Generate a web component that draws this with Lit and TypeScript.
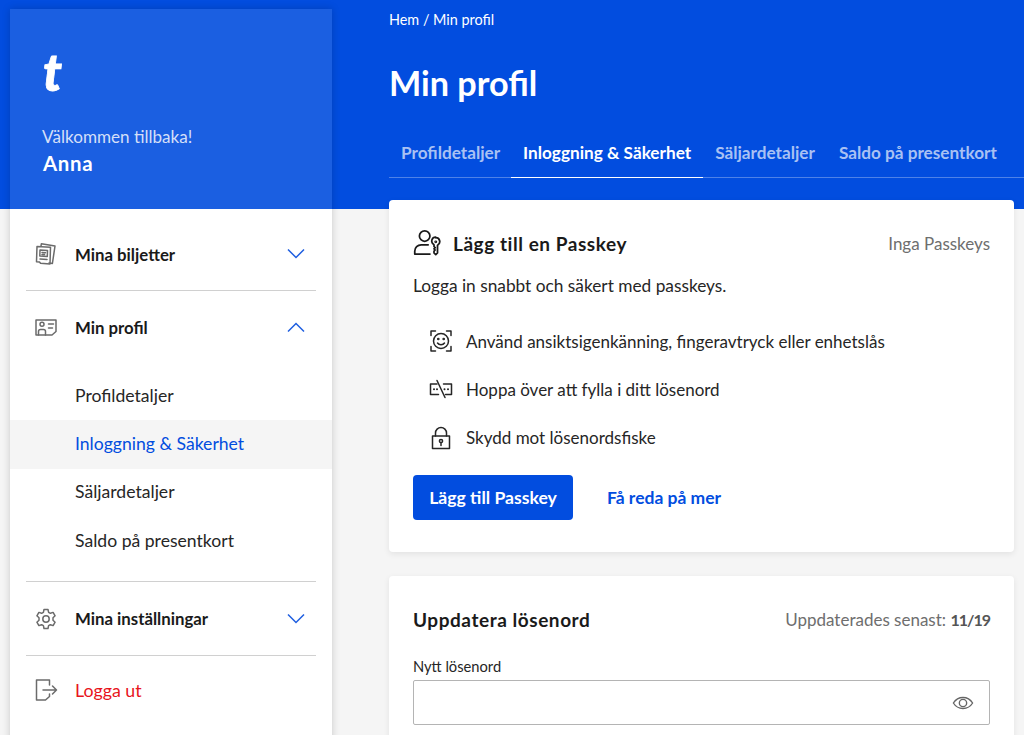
import { LitElement, html, css, svg } from 'lit'
import { customElement } from 'lit/decorators.js'

// Stroke icons, all drawn on a 24 box
const icon = (body: unknown, size = 24) => html`<svg
  width=${size}
  height=${size}
  viewBox="0 0 24 24"
  fill="none"
  stroke="currentColor"
  stroke-width="1.5"
  stroke-linecap="round"
  stroke-linejoin="round"
>
  ${body}
</svg>`

const icons = {
  tickets: svg`<path d="M7 4l.4-2.300 13.600 2.300-2.600 17.500-3.400-.5"/><path d="M3 4.500l13.500.8-.5 16.700-9.500-.8-1-1.200-3-.3z"/><path d="M6 8l7.500.4-.2 6-7.500-.4zM8 10.500l3.500.2M8 12.500l2.500.1M6 17l7 .4"/>`,
  profile: svg`<path d="M2 5h20v11.500l-4 3.500h-16z"/><circle cx="8" cy="9.300" r="2"/><path d="M4.500 20v-3.500a2 2 0 0 1 2-2h3a2 2 0 0 1 2 2v3.500M14.500 9h5M14.500 13h4"/>`,
  gear: svg`<circle cx="12" cy="12" r="3.200"/><path d="M10 2.500h4l.6 2.800 1.800 1 2.700-.9 2 3.400-2.100 1.900v2.600l2.100 1.900-2 3.400-2.700-.9-1.800 1-.6 2.800h-4l-.6-2.800-1.800-1-2.700.9-2-3.400 2.100-1.900v-2.600l-2.100-1.900 2-3.400 2.700.9 1.800-1z"/>`,
  logout: svg`<path d="M15.500 7v-5h-13v20h9l4-3.500v-2.500"/><path d="M9 12h13.500M18.500 8l4 4-4 4"/>`,
  personKey: svg`<circle cx="10" cy="6" r="4.500"/><path d="M1.500 21.500v-2.500a5.500 5.500 0 0 1 5.500-5.500h6M1.500 21.500h13"/><path d="M19.500 7.500a3.300 3.300 0 0 1 2 6l-.5.500v6.500l-1.500 1.500-1.500-1.500v-1.500l1-1-1-1 1-1-1-1v-1.500l-.5-.5a3.300 3.300 0 0 1 2-6z"/><circle cx="19.500" cy="11" r=".5"/>`,
  face: svg`<path d="M2 6.500v-4.500h4.500M17.500 2h4.500v4.500M22 17.500v4.500h-4.500M6.500 22h-4.500v-4.500"/><circle cx="12" cy="12" r="7.500"/><circle cx="9.300" cy="10" r=".6"/><circle cx="14.700" cy="10" r=".6"/><path d="M8.500 14c1.500 2.200 5.500 2.200 7 0"/>`,
  noPassword: svg`<path d="M8 7h-6.500v10.500h8M14.500 7h8v10.500h-6"/><path d="M8 3.500l8 17"/><path d="M5 12.300h.01M8 12.300h.01M15.500 12.300h.01M19 12.300h.01" stroke-width="2"/>`,
  lock: svg`<rect x="3.500" y="10" width="17" height="12.500"/><path d="M6.500 10v-3a5.500 5.500 0 0 1 11 0v3"/><circle cx="12" cy="15" r="1.600"/><path d="M12 16.600v3"/>`,
  eye: svg`<path d="M1.500 12c5-8 16-8 21 0-5 8-16 8-21 0z"/><circle cx="12" cy="12" r="4"/>`,
}

const chevron = (up: boolean) => html`<svg class="chevron" width="18" height="10" viewBox="0 0 18 10" fill="none" stroke="currentColor" stroke-width="1.5">
  <path d=${up ? 'M1 9.500l8-8 8 8' : 'M1 .5l8 8 8-8'} />
</svg>`

@customElement('side-nav')
export class SideNav extends LitElement {
  static styles = css`
    :host {
      display: block;
      background: #fff;
      box-shadow: 0 0 8px rgba(0, 0, 0, 0.18);
    }
    .welcome {
      height: 200px;
      box-sizing: border-box;
      padding: 33px 32px 0;
      background: #1b5fe1;
      color: #fff;
    }
    .logo {
      font: italic 900 51px/60px 'Lato', sans-serif;
      -webkit-text-stroke: 0.8px #fff;
      height: 60px;
      padding-left: 1px;
    }
    .hello {
      margin-top: 24px;
      font-size: 17.100px;
      line-height: 22px;
      color: #d4dff8;
    }
    .name {
      margin-top: 2px;
      padding-left: 1px;
      font-size: 20.400px;
      line-height: 26px;
      font-weight: 700;
      letter-spacing: 0.7px;
    }
    nav {
      padding-top: 9px;
      height: 518px;
    }
    .row {
      display: flex;
      align-items: center;
      height: 72px;
      margin: 0 16px;
      border-bottom: 1px solid #d0d0d0;
      color: #1a1a1a;
      font-size: 16.800px;
      font-weight: 700;
    }
    .row.open {
      border-bottom: 0;
    }
    .row.tall {
      height: 73px;
    }
    .row.last {
      height: 68px;
      border-bottom: 0;
      color: #e8141c;
      font-size: 17.800px;
      font-weight: 400;
    }
    .row svg {
      color: #6b6b6b;
      margin-left: 8px;
      flex: none;
    }
    .row .label {
      flex: 1;
      margin-left: 17px;
    }
    .row svg.chevron {
      color: #1f5fe0;
      margin: 0 11px 0 0;
    }
    .subitems {
      padding: 9px 0 16px;
    }
    .divider {
      height: 1px;
      margin: 0 16px;
      background: #d0d0d0;
    }
    .subitem {
      height: 48.330px;
      box-sizing: border-box;
      display: flex;
      align-items: center;
      padding: 0 0 2px 65px;
      font-size: 17.600px;
      color: #262626;
    }
    .subitem.active {
      background: #f5f5f5;
      color: #024ddf;
    }
  `

  render() {
    return html`
      <div class="welcome">
        <div class="logo">t</div>
        <div class="hello">Välkommen tillbaka!</div>
        <div class="name">Anna</div>
      </div>
      <nav>
        <div class="row">
          ${icon(icons.tickets)}<span class="label">Mina biljetter</span>${chevron(false)}
        </div>
        <div class="row open">
          ${icon(icons.profile)}<span class="label">Min profil</span>${chevron(true)}
        </div>
        <div class="subitems">
          <div class="subitem">Profildetaljer</div>
          <div class="subitem active">Inloggning &amp; Säkerhet</div>
          <div class="subitem">Säljardetaljer</div>
          <div class="subitem">Saldo på presentkort</div>
        </div>
        <div class="divider"></div>
        <div class="row tall">
          ${icon(icons.gear)}<span class="label">Mina inställningar</span>${chevron(false)}
        </div>
        <div class="row last">
          ${icon(icons.logout)}<span class="label">Logga ut</span>
        </div>
      </nav>
    `
  }
}

@customElement('app-root')
export class AppRoot extends LitElement {
  static styles = css`
    :host {
      display: block;
      height: 735px;
      overflow: hidden;
      font-family: 'Lato', 'Liberation Sans', sans-serif;
      background: linear-gradient(#024ddf 209px, #f5f5f5 209px);
    }
    .page {
      display: grid;
      grid-template-columns: 322px 1fr;
      column-gap: 57px;
      padding: 9px 10px 0;
    }
    .crumbs {
      margin-top: 2px;
      font-size: 14.400px;
      line-height: 18px;
      color: #fff;
    }
    h1 {
      margin: 32px 0 0;
      font-size: 34.200px;
      line-height: 44px;
      font-weight: 700;
      color: #fff;
    }
    .tabs {
      display: flex;
      margin-top: 23px;
      margin-right: -10px;
      height: 50px;
      box-sizing: border-box;
      border-bottom: 1px solid rgba(255, 255, 255, 0.3);
    }
    .tab {
      padding: 0 12px;
      height: 50px;
      box-sizing: border-box;
      line-height: 50px;
      font-size: 17.200px;
      font-weight: 700;
      color: #a9c1f3;
    }
    .tab:first-child {
      padding-right: 11px;
    }
    .tab.active {
      color: #fff;
      border-bottom: 1px solid #fff;
    }
    .card {
      background: #fff;
      border-radius: 4px;
      box-shadow: 0 2px 6px rgba(0, 0, 0, 0.08);
      padding: 0 24px;
    }
    .passkey {
      margin-top: 22px;
      height: 352px;
      box-sizing: border-box;
      padding-top: 29px;
    }
    .head {
      display: flex;
      align-items: center;
      justify-content: space-between;
      color: #1a1a1a;
    }
    .head-left {
      display: flex;
      align-items: center;
      gap: 12px;
    }
    h2 {
      margin: 0;
      font-size: 19px;
      font-weight: 700;
      letter-spacing: 0.550px;
      color: #1a1a1a;
    }
    .muted {
      font-size: 17px;
      color: #6e6e6e;
    }
    .muted b {
      font-size: 16px;
      letter-spacing: -1px;
      color: #555;
    }
    .lead {
      margin: 17px 0 0;
      font-size: 17.300px;
      line-height: 24px;
      color: #262626;
    }
    ul {
      list-style: none;
      margin: 19px 0 0;
      padding: 0 0 0 16px;
    }
    li {
      display: flex;
      align-items: center;
      gap: 13px;
      height: 48.300px;
      font-size: 17px;
      color: #262626;
    }
    li svg {
      flex: none;
    }
    .actions {
      display: flex;
      align-items: center;
      gap: 34px;
      margin-top: 13px;
    }
    button {
      width: 160px;
      height: 45px;
      border: 0;
      border-radius: 4px;
      background: #024ddf;
      color: #fff;
      font: 700 17.600px 'Lato', sans-serif;
    }
    .more {
      font-size: 17.500px;
      font-weight: 700;
      color: #024ddf;
    }
    .password {
      margin-top: 24px;
      height: 300px;
      box-sizing: border-box;
      padding-top: 31px;
    }
    .password .head {
      height: 24px;
    }
    label {
      display: block;
      margin-top: 26px;
      font-size: 14.700px;
      line-height: 18px;
      color: #262626;
    }
    .field {
      display: flex;
      align-items: center;
      justify-content: flex-end;
      height: 45px;
      box-sizing: border-box;
      margin-top: 5px;
      padding-right: 15px;
      border: 1px solid #b4b4b4;
      border-radius: 2px;
      color: #666;
    }
  `

  render() {
    return html`
      <div class="page">
        <side-nav></side-nav>
        <main>
          <div class="crumbs">Hem / Min profil</div>
          <h1>Min profil</h1>
          <div class="tabs">
            <div class="tab">Profildetaljer</div>
            <div class="tab active">Inloggning &amp; Säkerhet</div>
            <div class="tab">Säljardetaljer</div>
            <div class="tab">Saldo på presentkort</div>
          </div>
          <section class="card passkey">
            <div class="head">
              <div class="head-left">${icon(icons.personKey, 28)}<h2>Lägg till en Passkey</h2></div>
              <span class="muted">Inga Passkeys</span>
            </div>
            <p class="lead">Logga in snabbt och säkert med passkeys.</p>
            <ul>
              <li>${icon(icons.face)}Använd ansiktsigenkänning, fingeravtryck eller enhetslås</li>
              <li>${icon(icons.noPassword)}Hoppa över att fylla i ditt lösenord</li>
              <li>${icon(icons.lock)}Skydd mot lösenordsfiske</li>
            </ul>
            <div class="actions">
              <button>Lägg till Passkey</button>
              <span class="more">Få reda på mer</span>
            </div>
          </section>
          <section class="card password">
            <div class="head">
              <h2>Uppdatera lösenord</h2>
              <span class="muted">Uppdaterades senast: <b>11/19</b></span>
            </div>
            <label>Nytt lösenord</label>
            <div class="field">${icon(icons.eye, 22)}</div>
          </section>
        </main>
      </div>
    `
  }
}
